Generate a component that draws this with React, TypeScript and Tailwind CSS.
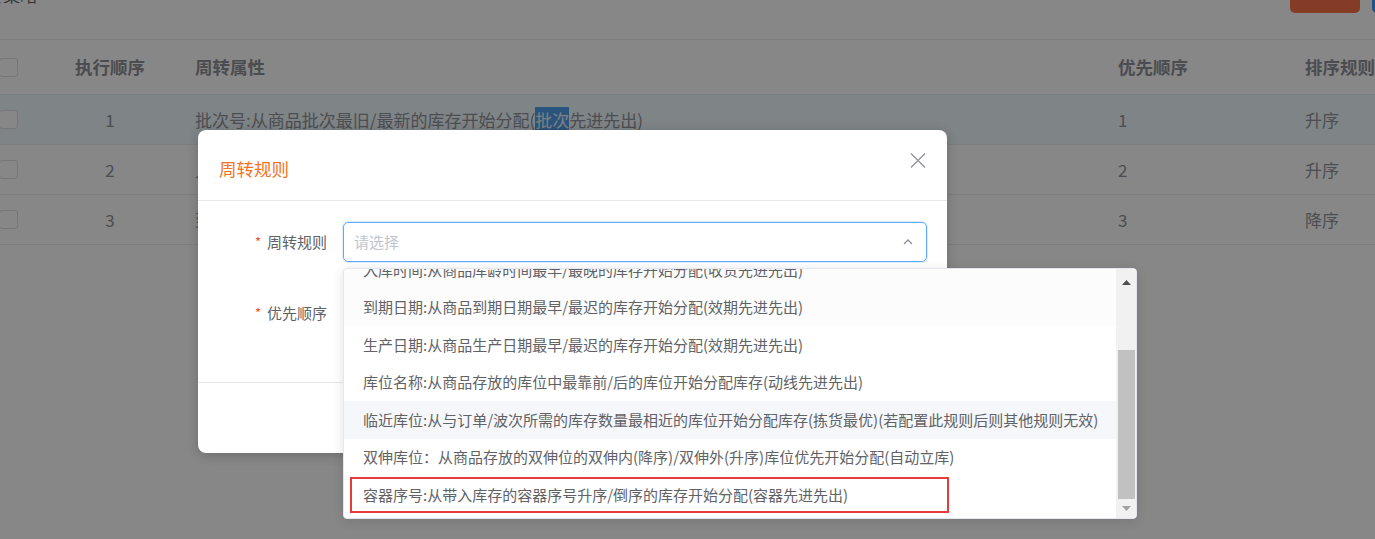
import React from 'react'

const font = { fontFamily: '"Noto Sans CJK SC", "Liberation Sans", sans-serif' }

const rows = [
  { no: '1', text: '批次号:从商品批次最旧/最新的库存开始分配(', hl: '批次', tail: '先进先出)', pri: '1', sort: '升序', active: true },
  { no: '2', text: '入库时间:从商品库龄时间最早/最晚的库存开始分配(收货先进先出)', pri: '2', sort: '升序' },
  { no: '3', text: '到期日期:从商品到期日期最早/最迟的库存开始分配(效期先进先出)', pri: '3', sort: '降序' },
]

const options = [
  '入库时间:从商品库龄时间最早/最晚的库存开始分配(收货先进先出)',
  '到期日期:从商品到期日期最早/最迟的库存开始分配(效期先进先出)',
  '生产日期:从商品生产日期最早/最迟的库存开始分配(效期先进先出)',
  '库位名称:从商品存放的库位中最靠前/后的库位开始分配库存(动线先进先出)',
  '临近库位:从与订单/波次所需的库存数量最相近的库位开始分配库存(拣货最优)(若配置此规则后则其他规则无效)',
  '双伸库位：从商品存放的双伸位的双伸内(降序)/双伸外(升序)库位优先开始分配(自动立库)',
  '容器序号:从带入库存的容器序号升序/倒序的库存开始分配(容器先进先出)',
]

function Checkbox() {
  return <div className="w-[19px] h-[19px] -ml-px rounded-[3px] border border-[#dcdfe6] bg-white" />
}

function Table() {
  return (
    <div className="text-[17px] text-[#909399]">
      <div className="grid grid-cols-[40px_140px_923px_187px_1fr] h-[55px] items-center border-b border-[#ebeef5] font-bold text-[17.5px] text-[#8e9096]">
        <Checkbox />
        <div className="text-center">执行顺序</div>
        <div className="pl-[15px]">周转属性</div>
        <div className="pl-[15px]">优先顺序</div>
        <div className="pl-[15px] whitespace-nowrap">排序规则</div>
      </div>
      {rows.map((r) => (
        <div
          key={r.no}
          className={`grid grid-cols-[40px_140px_923px_187px_1fr] h-[50px] items-center border-b border-[#ebeef5] ${r.active ? 'bg-[#f0f9ff]' : ''}`}
        >
          <Checkbox />
          <div className="text-center">{r.no}</div>
          <div className="pl-[15px] whitespace-nowrap">
            {r.text}
            {r.hl && <span className="bg-[#4f9fef] text-[#eef2f6]">{r.hl}</span>}
            {r.tail}
          </div>
          <div className="pl-[15px]">{r.pri}</div>
          <div className="pl-[15px]">{r.sort}</div>
        </div>
      ))}
    </div>
  )
}

function Dialog() {
  return (
    <div className="absolute left-[198px] top-[130px] w-[749px] h-[323px] bg-white rounded-[8px] shadow-[0_2px_12px_rgba(0,0,0,0.2)] flex flex-col">
      <div className="relative h-[71px] border-b border-[#e8e8e8] pl-[21px] pt-[27px]">
        <div className="text-[17.5px] leading-[24px] text-[#f47321]">周转规则</div>
        <svg className="absolute right-[21px] top-[23px]" width="16" height="15" viewBox="0 0 16 15">
          <path d="M1 0.5 L15 14.5 M15 0.5 L1 14.5" stroke="#919399" strokeWidth="1.3" fill="none" />
        </svg>
      </div>
      <div className="h-[182px] border-b border-[#e8e8e8] pt-[21px] pr-[20px] flex flex-col gap-[31px]">
        <div className="flex items-center">
          <div className="w-[145px] pr-[16px] flex justify-end items-center text-[15px] text-[#606266]">
            <span className="text-[#ee4d2d] mr-[6px] text-[13px]">*</span>周转规则
          </div>
          <div className="flex-1 h-[40px] rounded-[5px] border border-[#5ea9ff] shadow-[0_0_0_1px_rgba(64,158,255,0.18)] flex items-center justify-between pl-[10px] pr-[13px]">
            <span className="text-[15px] text-[#c0c4cc]">请选择</span>
            <svg width="10" height="6" viewBox="0 0 10 6">
              <path d="M1 5 L5 1 L9 5" stroke="#8d9097" strokeWidth="1.3" fill="none" />
            </svg>
          </div>
        </div>
        <div className="flex items-center">
          <div className="w-[145px] pr-[16px] flex justify-end items-center text-[15px] text-[#606266]">
            <span className="text-[#ee4d2d] mr-[6px] text-[13px]">*</span>优先顺序
          </div>
          <div className="flex-1 h-[40px] rounded-[5px] border border-[#dcdfe6]" />
        </div>
      </div>
      <div className="flex-1 flex items-center justify-end gap-3 pr-[20px]">
        <div className="h-[36px] w-[72px] rounded border border-[#dcdfe6]" />
        <div className="h-[36px] w-[72px] rounded bg-[#409eff]" />
      </div>
    </div>
  )
}

function Dropdown() {
  return (
    <div className="absolute left-[343px] top-[268px] w-[794px] h-[251px] bg-white rounded-[4px] border border-[#e4e7ed] shadow-[0_2px_12px_rgba(0,0,0,0.12)] flex overflow-hidden">
      <div className="flex-1 overflow-hidden">
        <div className="-mt-[18px]">
          {options.map((o, i) => (
            <div
              key={o}
              className={`h-[37.5px] flex items-center pl-[19px] text-[15px] text-[#606266] whitespace-nowrap ${i === 4 ? 'bg-[#f5f7fa]' : i < 2 ? 'bg-[#fcfcfc]' : ''}`}
            >
              {o}
            </div>
          ))}
        </div>
      </div>
      <div className="w-[20px] bg-[#f1f1f1] flex flex-col items-center">
        <div className="h-[26px] flex items-center justify-center pt-[1px]">
          <svg width="9" height="5" viewBox="0 0 9 5"><path d="M0 5 L4.5 0 L9 5 Z" fill="#505050" /></svg>
        </div>
        <div className="mt-[55px] w-[17px] h-[149px] bg-[#c1c1c1]" />
        <div className="flex-1 flex items-center justify-center">
          <svg width="9" height="5" viewBox="0 0 9 5"><path d="M0 0 L4.5 5 L9 0 Z" fill="#a3a3a3" /></svg>
        </div>
      </div>
      <div className="absolute left-[6px] top-[208px] w-[599px] h-[36px] border-2 border-[#e83a3a]" />
    </div>
  )
}

export default function App() {
  return (
    <div className="relative w-full h-[539px] overflow-hidden bg-white" style={font}>
      <div className="h-[40px] border-b border-[#ebeef5] flex justify-between">
        <div className="-mt-[15px] -ml-[14px] text-[17px] leading-[20px] text-[#606266]">转策略</div>
        <div className="flex gap-[12px] -mt-[20px] -mr-[12px]">
          <div className="w-[70px] h-[33px] rounded-[5px] bg-[#f9714a]" />
          <div className="w-[15px] h-[33px] rounded-[5px] bg-[#409eff]" />
        </div>
      </div>
      <Table />
      <div className="absolute inset-0 bg-black/47" />
      <Dialog />
      <Dropdown />
    </div>
  )
}
